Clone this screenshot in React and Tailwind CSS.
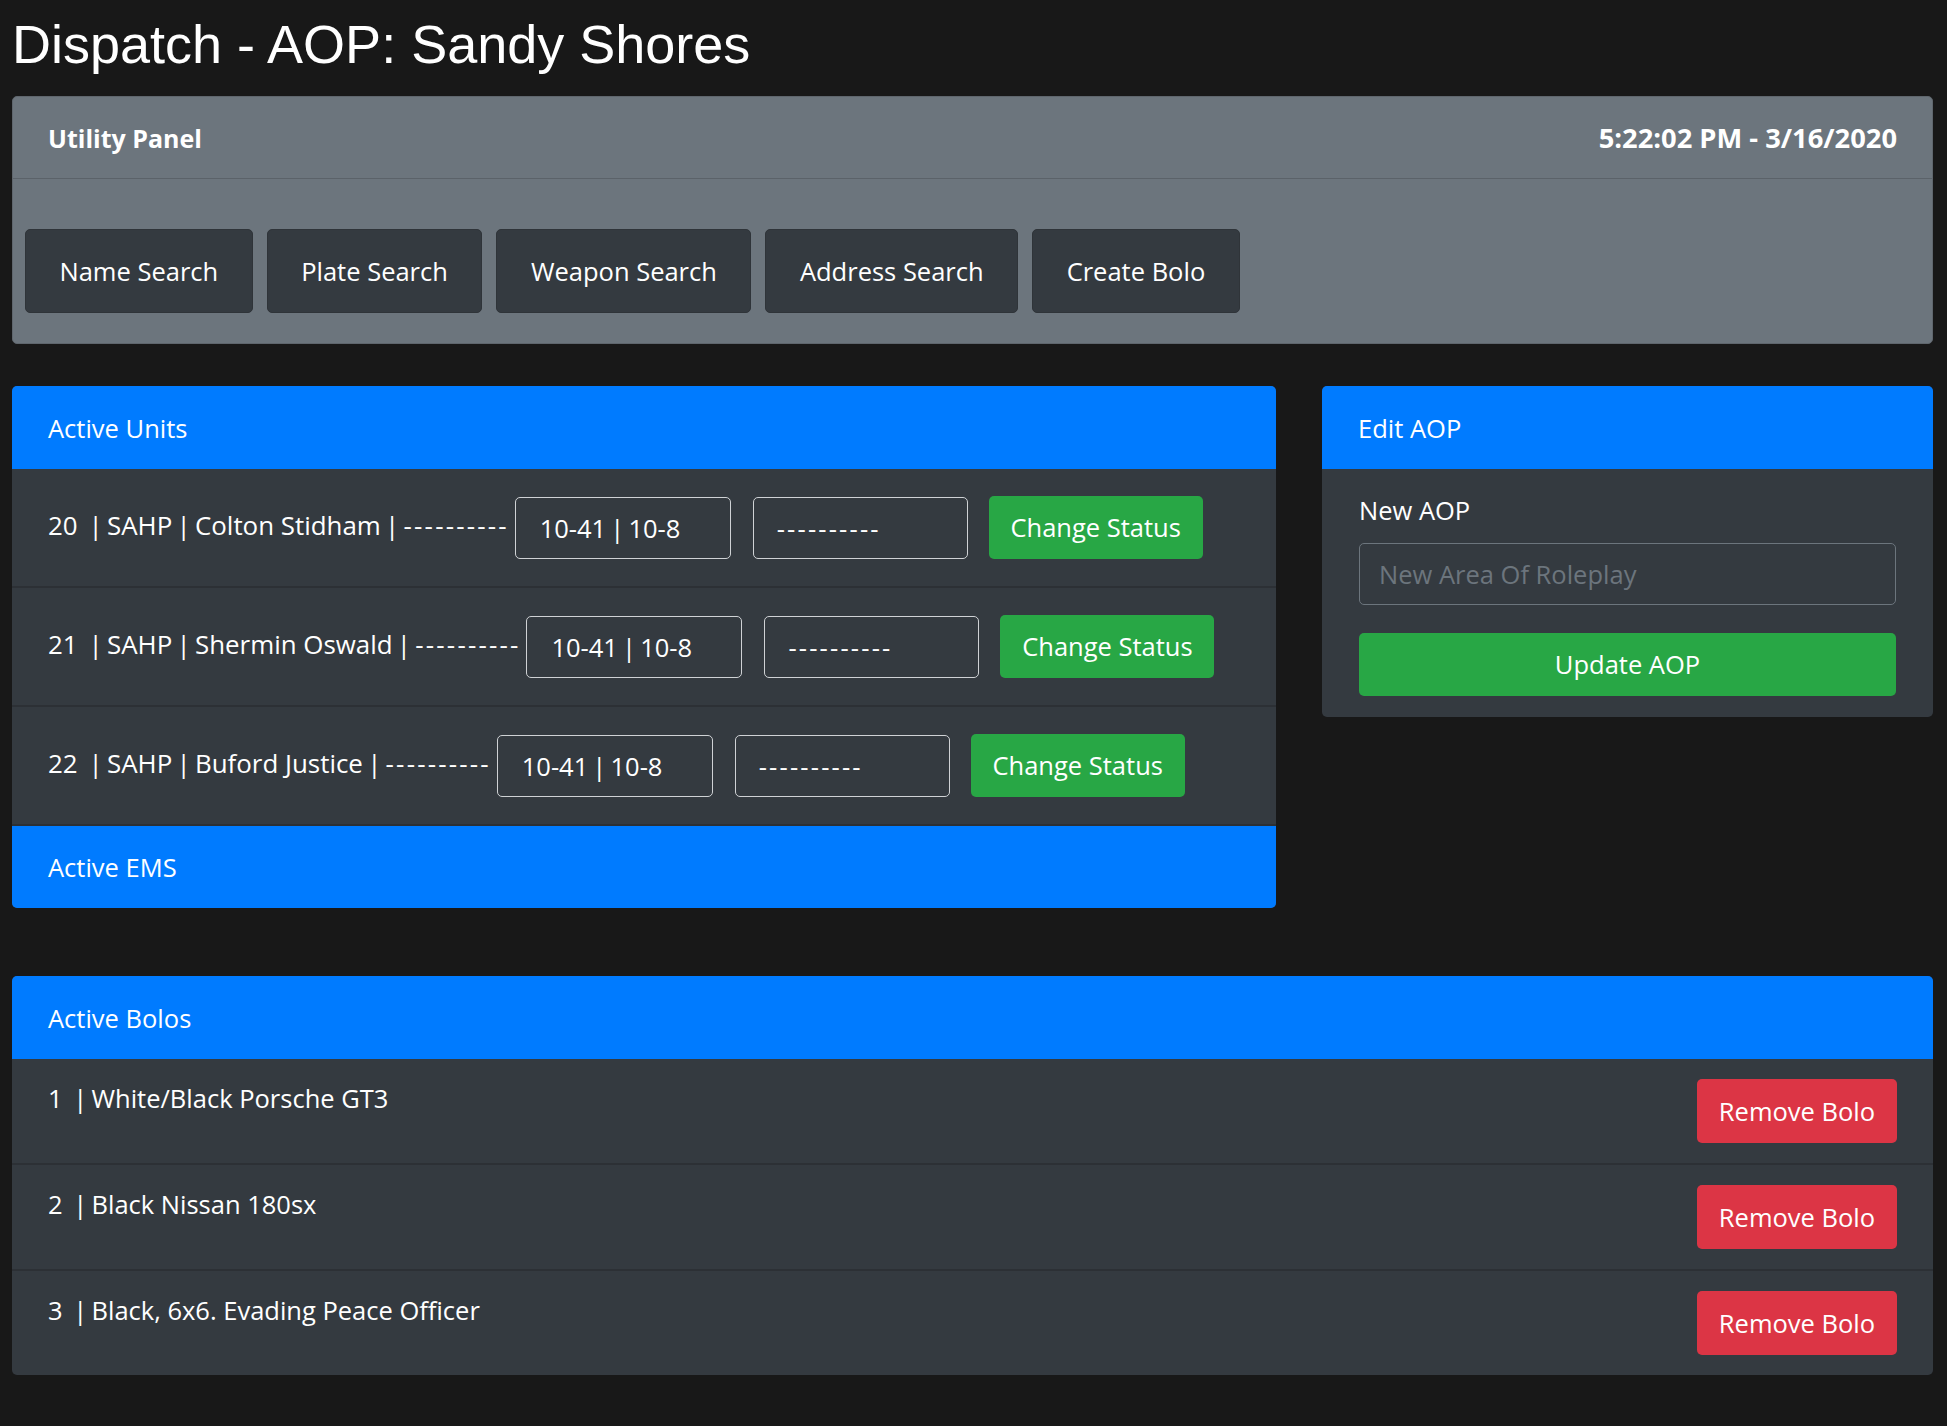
import React from "react";

const units = [
  { id: "20", dept: "SAHP", name: "Colton Stidham" },
  { id: "21", dept: "SAHP", name: "Shermin Oswald" },
  { id: "22", dept: "SAHP", name: "Buford Justice" },
];

const bolos = [
  { id: "1", text: "White/Black Porsche GT3" },
  { id: "2", text: "Black Nissan 180sx" },
  { id: "3", text: "Black, 6x6. Evading Peace Officer" },
];

const utilButtons = ["Name Search", "Plate Search", "Weapon Search", "Address Search", "Create Bolo"];

function Pipe() {
  return <span className="inline-block mx-[-2.5px]">|</span>;
}

function UnitRow({ u }) {
  return (
    <div className="flex items-center h-[119px] px-[36px] border-b-2 border-[#2c3035]">
      <span className="text-[25.9px] leading-[39px] whitespace-nowrap mb-[5px]">
        {u.id}
        {"\u00a0 "}
        <Pipe /> {u.dept} <Pipe /> {u.name} <Pipe /> <span className="tracking-[2.2px] mr-[-2.2px]">----------</span>
      </span>
      <input
        readOnly
        value="10-41 | 10-8"
        className="ml-[8px] w-[216px] h-[62px] border border-[#cfd2d5] rounded-[5px] bg-transparent pl-[24px] text-[25.5px] text-white outline-none [word-spacing:-2.5px]"
      />
      <input
        readOnly
        value="----------"
        className="ml-[22px] w-[215px] h-[62px] border border-[#cfd2d5] rounded-[5px] bg-transparent pl-[23px] text-[25.5px] text-white outline-none tracking-[2.2px]"
      />
      <button className="ml-[21px] w-[214px] h-[63px] bg-[#28a745] rounded-[5px] text-[25.5px] text-white">
        Change Status
      </button>
    </div>
  );
}

function BoloRow({ b, last }) {
  return (
    <div
      className={
        "flex items-start justify-between px-[36px] pt-[20px] pb-[20px] " +
        (last ? "" : "border-b-2 border-[#2c3035]")
      }
    >
      <span className="text-[25.5px] leading-[38px] whitespace-nowrap">
        {b.id}
        {"\u00a0 "}
        <Pipe /> {b.text}
      </span>
      <button className="w-[200px] h-[64px] bg-[#dc3545] rounded-[5px] text-[25.5px] text-white">
        Remove Bolo
      </button>
    </div>
  );
}

export default function App() {
  return (
    <div className="min-h-screen bg-[#181818] pl-[12px] pr-[14px] pt-[12px] pb-[51px] text-white font-['Open_Sans',sans-serif]">
      <h1 className="font-['Liberation_Sans',Arial,sans-serif] text-[54px] leading-[64px] mb-[20px] text-white font-normal">
        Dispatch - AOP: Sandy Shores
      </h1>

      <div className="rounded-[5px] bg-[#6c757d] border border-[#5f666d]">
        <div className="flex items-center justify-between h-[82px] border-b border-[#5b6269] px-[35px] pt-[2px]">
          <span className="font-bold text-[25px]">Utility Panel</span>
          <span className="font-bold text-[27.3px]">5:22:02 PM - 3/16/2020</span>
        </div>
        <div className="flex gap-[14px] pl-[12px] pt-[50px] pb-[30px]">
          {utilButtons.map((t) => (
            <button
              key={t}
              className="h-[84px] px-[33.5px] rounded-[5px] bg-[#343a40] border border-[#2f3439] text-[25.5px] text-white"
            >
              {t}
            </button>
          ))}
        </div>
      </div>

      <div className="flex items-start gap-[46px] mt-[42px]">
        <div className="w-[1264px] rounded-[5px] overflow-hidden bg-[#343a40]">
          <div className="h-[83px] bg-[#007bff] flex items-center px-[36px] pt-[1px] text-[25.5px]">Active Units</div>
          {units.map((u) => (
            <UnitRow key={u.id} u={u} />
          ))}
          <div className="h-[82px] bg-[#007bff] flex items-center px-[36px] text-[25.5px]">Active EMS</div>
        </div>

        <div className="flex-1 rounded-[5px] overflow-hidden bg-[#343a40]">
          <div className="h-[83px] bg-[#007bff] flex items-center px-[36px] pt-[1px] text-[25.5px]">Edit AOP</div>
          <div className="px-[37px] pt-[22px] pb-[21px]">
            <div className="text-[25.5px] leading-[38px]">New AOP</div>
            <input
              placeholder="New Area Of Roleplay"
              className="mt-[14px] block w-full h-[62px] border border-[#6c757d] rounded-[5px] bg-transparent px-[19px] text-[25.5px] text-white placeholder:text-[#6c757d] outline-none"
            />
            <button className="mt-[28px] block w-full h-[63px] bg-[#28a745] rounded-[5px] text-[25.5px] text-white">
              Update AOP
            </button>
          </div>
        </div>
      </div>

      <div className="mt-[68px] rounded-[5px] overflow-hidden bg-[#343a40]">
        <div className="h-[83px] bg-[#007bff] flex items-center px-[36px] pt-[1px] text-[25.5px]">Active Bolos</div>
        {bolos.map((b, i) => (
          <BoloRow key={b.id} b={b} last={i === bolos.length - 1} />
        ))}
      </div>
    </div>
  );
}
